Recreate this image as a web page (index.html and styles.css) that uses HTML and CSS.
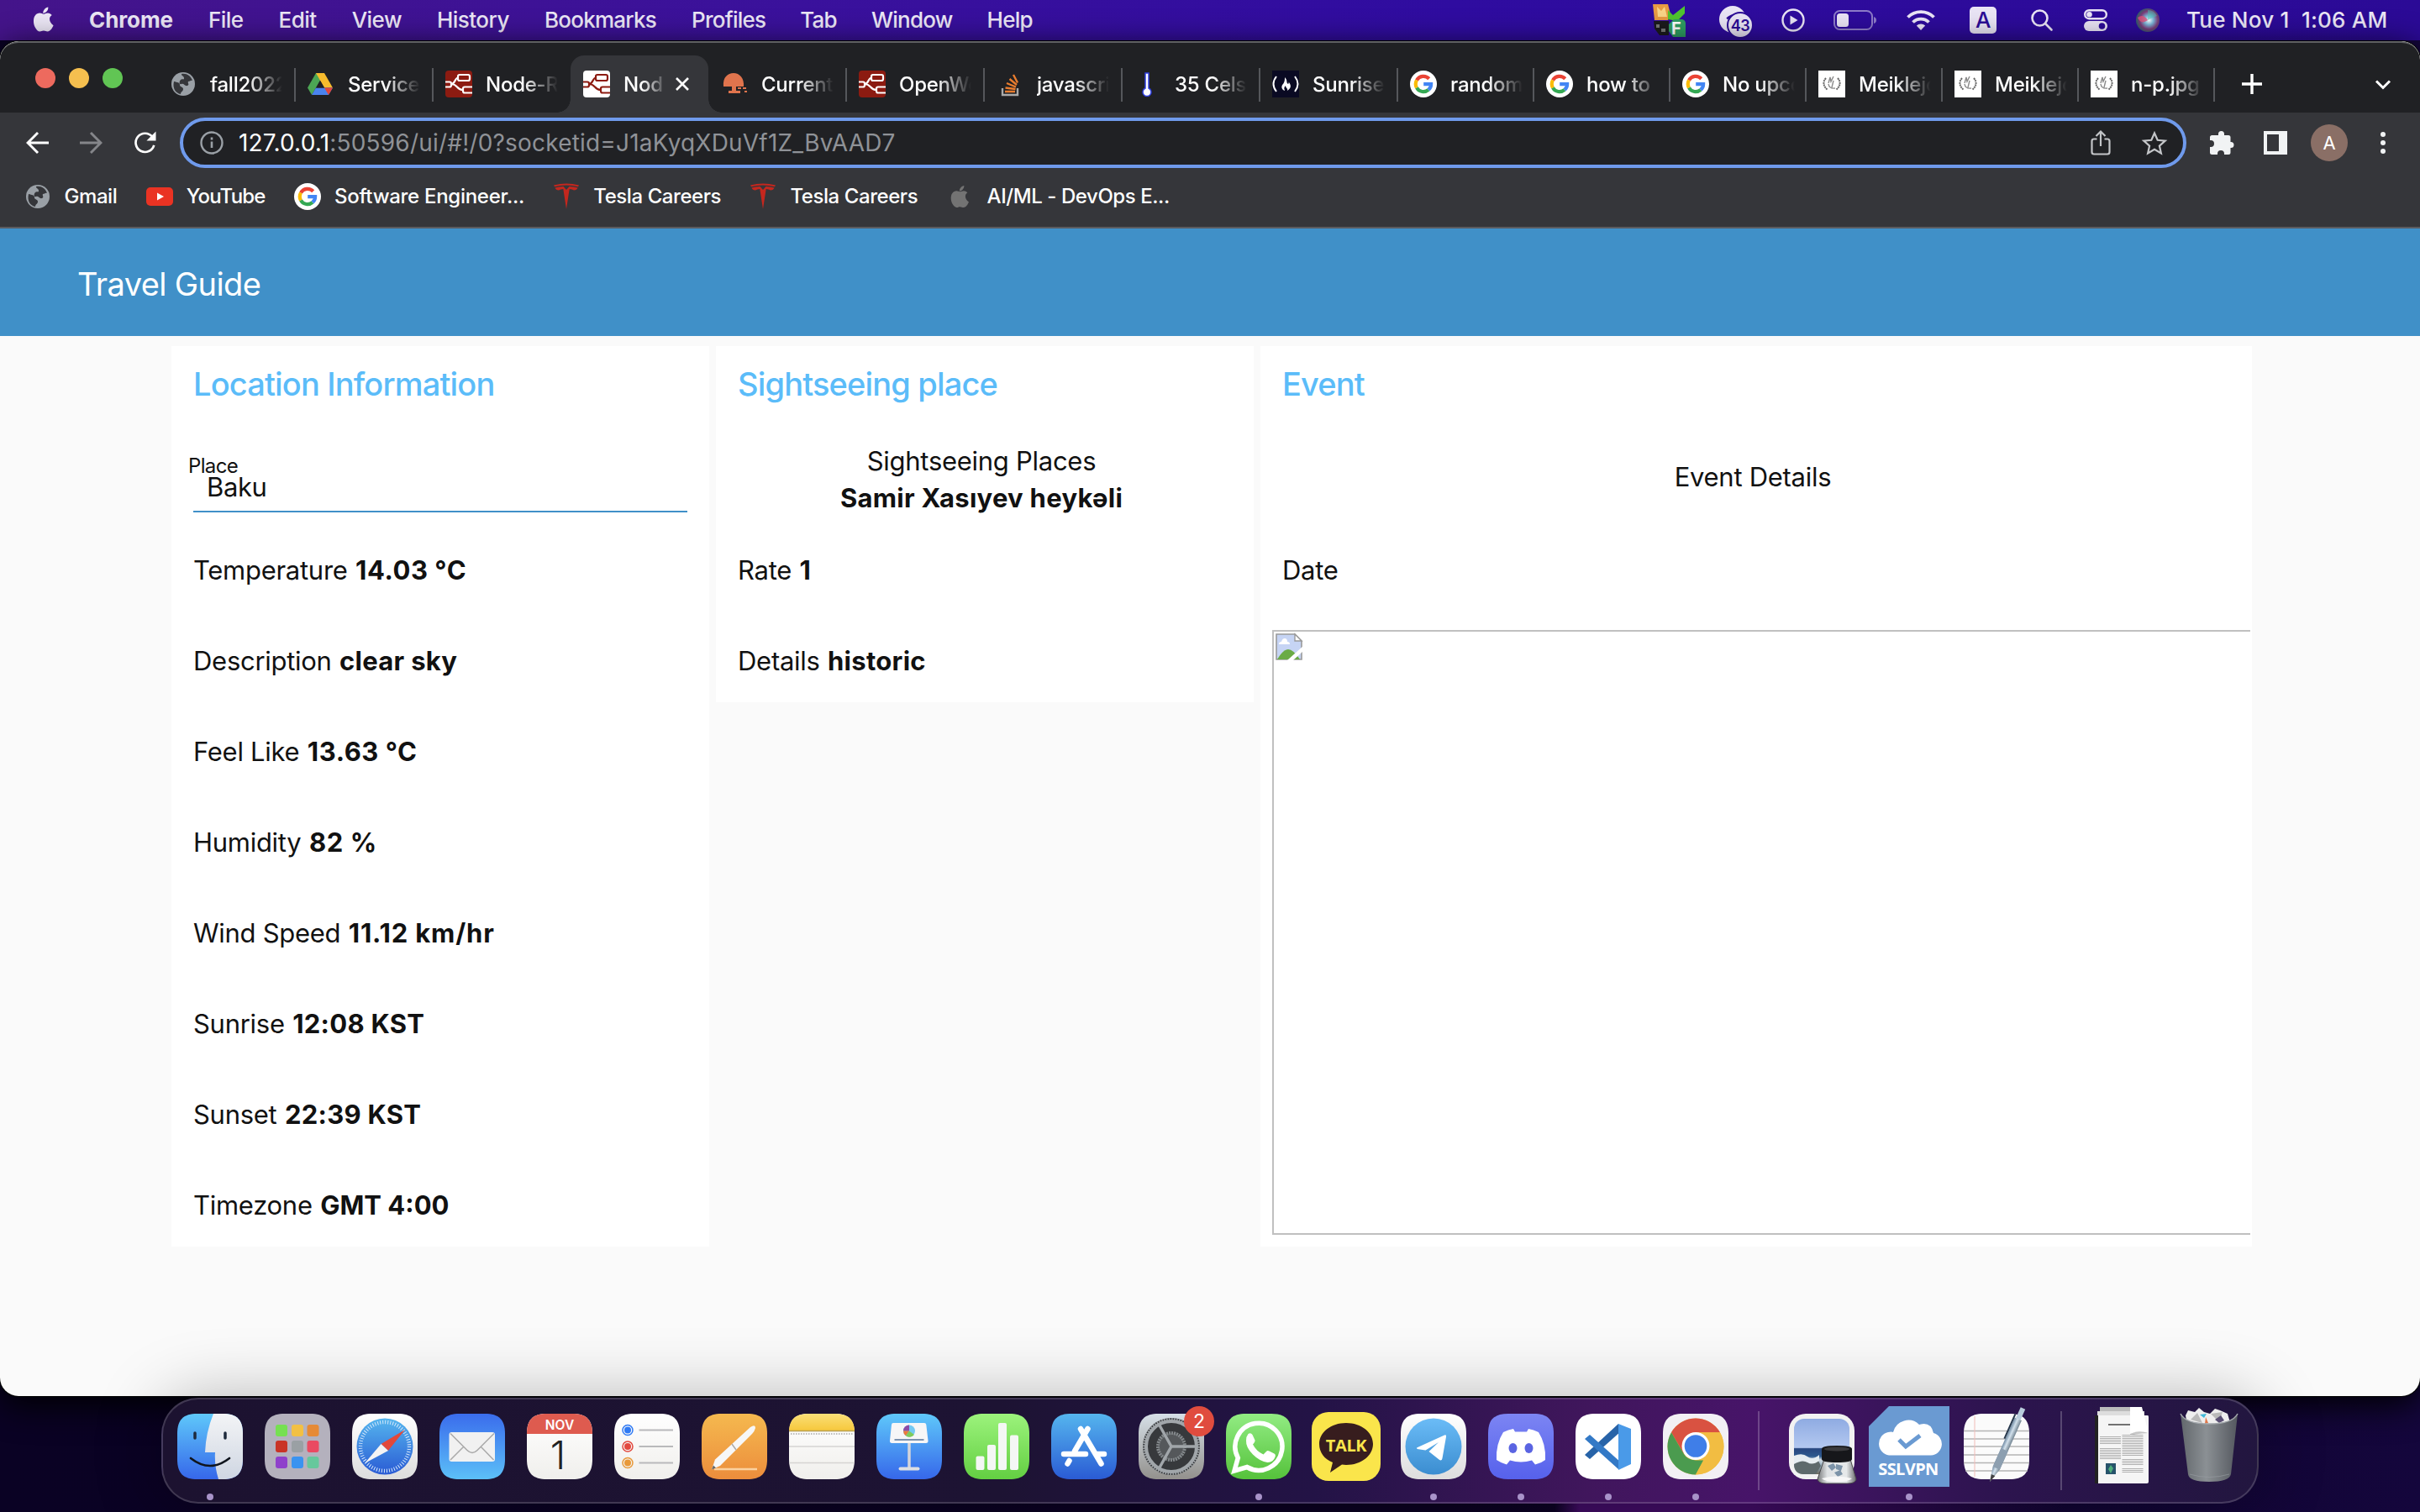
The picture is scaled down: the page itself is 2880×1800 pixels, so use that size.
FILE: index.html
```html
<!DOCTYPE html>
<html lang="en">
<head>
<meta charset="utf-8">
<title>Travel Guide</title>
<link rel="stylesheet" href="styles.css">
</head>
<body>
<svg class="defs" aria-hidden="true">
  <defs>
    <linearGradient id="gBlue" x1="0" y1="0" x2="0" y2="1"><stop offset="0" stop-color="#5fc8fa"/><stop offset="1" stop-color="#3667ea"/></linearGradient>
    <linearGradient id="gBlueUp" x1="0" y1="0" x2="0" y2="1"><stop offset="0" stop-color="#3a6cec"/><stop offset="1" stop-color="#5cc0f8"/></linearGradient>
    <linearGradient id="gStore" x1="0" y1="0" x2="0" y2="1"><stop offset="0" stop-color="#55b5ee"/><stop offset="1" stop-color="#2a5bd4"/></linearGradient>
    <linearGradient id="gSky" x1="0" y1="0" x2="0" y2="1"><stop offset="0" stop-color="#6bbcf7"/><stop offset="1" stop-color="#3b8dd0"/></linearGradient>
    <linearGradient id="gGreen" x1="0" y1="0" x2="0" y2="1"><stop offset="0" stop-color="#9cf37c"/><stop offset="1" stop-color="#63cf42"/></linearGradient>
    <linearGradient id="gWhats" x1="0" y1="0" x2="0" y2="1"><stop offset="0" stop-color="#92ec83"/><stop offset="1" stop-color="#55c23b"/></linearGradient>
    <linearGradient id="gOrange" x1="0" y1="0" x2="0" y2="1"><stop offset="0" stop-color="#f5b94f"/><stop offset="1" stop-color="#ec8d3c"/></linearGradient>
    <linearGradient id="gYellow" x1="0" y1="0" x2="0" y2="1"><stop offset="0" stop-color="#fadf78"/><stop offset="1" stop-color="#f6c83c"/></linearGradient>
    <linearGradient id="gWhite" x1="0" y1="0" x2="0" y2="1"><stop offset="0" stop-color="#ffffff"/><stop offset="1" stop-color="#dddddd"/></linearGradient>
    <linearGradient id="gPaper" x1="0" y1="0" x2="0" y2="1"><stop offset="0" stop-color="#ffffff"/><stop offset="1" stop-color="#f0efec"/></linearGradient>
    <linearGradient id="gFace" x1="0" y1="0" x2="0" y2="1"><stop offset="0" stop-color="#f3f4f6"/><stop offset="1" stop-color="#cfd6e2"/></linearGradient>
    <linearGradient id="gDisc" x1="0" y1="0" x2="0" y2="1"><stop offset="0" stop-color="#7c85f3"/><stop offset="1" stop-color="#5661ec"/></linearGradient>
    <linearGradient id="gGrey" x1="0" y1="0" x2="0" y2="1"><stop offset="0" stop-color="#d6dfe7"/><stop offset="1" stop-color="#93918d"/></linearGradient>
    <linearGradient id="gCan" x1="0" y1="0" x2="1" y2="0"><stop offset="0" stop-color="#62676c"/><stop offset=".45" stop-color="#8b9094"/><stop offset="1" stop-color="#54585f"/></linearGradient>
    <linearGradient id="gOcean" x1="0" y1="0" x2="0" y2="1"><stop offset="0" stop-color="#8fabe2"/><stop offset=".52" stop-color="#b3c8f0"/><stop offset=".54" stop-color="#27467f"/><stop offset=".68" stop-color="#2f5b8f"/><stop offset=".74" stop-color="#d3dde6"/><stop offset=".86" stop-color="#8ba4b4"/><stop offset="1" stop-color="#6d6a5e"/></linearGradient>
    <linearGradient id="gPen" x1="0" y1="0" x2="1" y2="0"><stop offset="0" stop-color="#6f8aa3"/><stop offset=".45" stop-color="#d3e1ec"/><stop offset="1" stop-color="#70828f"/></linearGradient>
    <linearGradient id="gJar" x1="0" y1="0" x2="1" y2="0"><stop offset="0" stop-color="#77797b"/><stop offset=".25" stop-color="#dfe2e4"/><stop offset=".75" stop-color="#e6e9ea"/><stop offset="1" stop-color="#6a6c6e"/></linearGradient>
    <radialGradient id="gSiri" cx=".55" cy=".5" r=".55"><stop offset="0" stop-color="#ffffff"/><stop offset=".35" stop-color="#7bb7d8"/><stop offset=".7" stop-color="#7b3b78"/><stop offset="1" stop-color="#2b5f6a"/></radialGradient>
  </defs>
  <symbol id="apple" viewBox="0 0 26 30"><path d="M18 0c.2 2-.6 3.800-1.800 5.200S13.200 7.600 11.700 7.500C11.500 5.700 12.400 3.800 13.500 2.600 14.700 1.100 16.600.1 18 0zM24.500 22.500c-.8 1.800-1.200 2.600-2.200 4.100-1.400 2-3.200 3.400-5.200 3.400-1.800 0-2.300-1-4.700-1s-3 1.100-4.800 1c-2 0-3.600-1.800-5-3.900C-.9 21-.7 13.400 1.900 10.300c1.500-2 3.600-3 5.700-3 2 0 3.300 1.100 5 1.100 1.600 0 2.600-1.100 5-1.100 1.800 0 3.700.9 5 2.600-4.300 2.500-3.700 8.800 1.900 12.600z"/></symbol>
  <symbol id="globe" viewBox="0 0 28 28"><circle cx="14" cy="14" r="14" fill="#9aa0a6"/><path d="M3 11c4 1 7 1 7 4s4 2 4 5-3 3-3 6C5 25 1 19 3 11zM12 2c6-1 11 2 13 8-2-1-3 1-5 1-1 2 2 4-1 5s-4-3-7-2-3-3-1-5 4 1 4-2-3-2-3-5z" fill="#35363a"/></symbol>
  <symbol id="google" viewBox="0 0 32 32"><circle cx="16" cy="16" r="16" fill="#fff"/><g fill="none" stroke-width="4.200"><path d="M22.700 9.700A9.200 9.200 0 0 0 8 11.500" stroke="#ea4335"/><path d="M8 11.500a9.200 9.200 0 0 0 0 9" stroke="#fbbc05"/><path d="M8 20.500a9.200 9.200 0 0 0 14 2.400" stroke="#34a853"/><path d="M22 22.900c2-1.800 3.100-4 3.100-6.700H16.200" stroke="#4285f4"/></g></symbol>
  <symbol id="nodered" viewBox="0 0 32 32"><g fill="none" stroke="currentColor" stroke-width="2.200"><rect x="15" y="5" width="14" height="7" rx="2"/><rect x="21" y="19.500" width="13" height="7" rx="2"/><path d="M0 13.500h5q2 0 2 2v2q0 2-2 2H0M7 16c5 0 4-7 8-7.500M7 16c8 0 6 7 14 7"/></g></symbol>
  <symbol id="tesla" viewBox="0 0 32 32"><path d="M1 2.500Q16-1.500 31 2.500l-1 1.700Q16 .8 2 4.200zM2.500 5.500Q8 4 12.500 4L16 8l3.500-4q4.500 0 10 1.500-1 3-4.500 3-2-1.500-5.300-1.500L16 31 12.300 7Q9 7 7 8.500q-3.500 0-4.500-3z" fill="#c4271e"/></symbol>
  <symbol id="meikle" viewBox="0 0 32 32"><path d="M0 0h32v32H0z" fill="#fff"/><g fill="none" stroke="#666" stroke-width="1.400"><path d="M9 9Q3 16 11 23M23 9q6 7-2 14" stroke-dasharray="2 .7" stroke-width="2"/><path d="M12 15l2-7 1 5 3-6M16 20l2-8M12 16q1 6 8 5" stroke="#8a8a8a"/></g></symbol>
  <symbol id="squircle" viewBox="0 0 78 78"><path d="M24 0h30c17 0 24 7 24 24v30c0 17-7 24-24 24H24C7 78 0 71 0 54V24C0 7 7 0 24 0z"/></symbol>
</svg>

<header class="menubar">
  <svg class="menubar-apple"><use href="#apple"/></svg>
  <nav class="menus"><b>Chrome</b><span>File</span><span>Edit</span><span>View</span><span>History</span><span>Bookmarks</span><span>Profiles</span><span>Tab</span><span>Window</span><span>Help</span></nav>
  <div class="status">
    <svg class="s-app" viewBox="0 0 40 40"><path d="M1 1h18l3 12-3 7H3z" fill="#e79a43"/><path d="M6 4l5 5 4-5 3 12H7z" fill="#f8d487"/><path d="M19 8l6 6L39 3v9l-9 9-11-2z" fill="#4fc42f"/><path d="M2 21h18v17H9l-6-8z" fill="#1b1b1d"/><path d="M5 25h4v4H5zM11 30h5v4h-5z" fill="#777"/><path d="M26 19h10q4 1 4 5v16H25l-5-7v-8z" fill="#2e9e63"/><text x="23" y="37" class="f-letter">F</text></svg>
    <svg class="s-chat" viewBox="0 0 40 38"><circle cx="16" cy="16" r="16" fill="#e9e4f5"/><path d="M9 15q8-7 17-3M9 15q7-2 14-1" fill="none" stroke="#2c0c96" stroke-width="2"/><circle cx="25" cy="23" r="15" fill="#e9e4f5" stroke="#2c0c96" stroke-width="2"/><text x="25" y="30" class="badge-num">43</text></svg>
    <svg class="s-play" viewBox="0 0 28 28"><circle cx="14" cy="14" r="12.500" fill="none" stroke="#e9e4f5" stroke-width="2.400"/><path d="M10.500 8.500v11l9-5.500z" fill="#e9e4f5"/></svg>
    <svg class="s-batt" viewBox="0 0 51 24"><rect x="1" y="1" width="45" height="22" rx="6.500" fill="none" stroke="#8d7bc8" stroke-width="2"/><rect x="4" y="4" width="14" height="16" rx="3.500" fill="#e9e4f5"/><path d="M48 8q3 1 3 4t-3 4z" fill="#8d7bc8"/></svg>
    <svg class="s-wifi" viewBox="0 0 34 24"><g fill="none" stroke="#e9e4f5" stroke-width="3.800"><path d="M1.500 8.500a22 22 0 0 1 31 0M7.500 14.500a13.500 13.500 0 0 1 19 0"/></g><path d="M17 24l-5.200-5.500a7.500 7.500 0 0 1 10.400 0z" fill="#e9e4f5"/></svg>
    <span class="s-input">A</span>
    <svg class="s-find" viewBox="0 0 26 26"><g fill="none" stroke="#e9e4f5" stroke-width="2.600" stroke-linecap="round"><circle cx="10.500" cy="10.500" r="9"/><path d="M17.500 17.500l7 7"/></g></svg>
    <svg class="s-ctrl" viewBox="0 0 28 26"><rect x="1.200" y="1.200" width="25.600" height="10" rx="5" fill="none" stroke="#e9e4f5" stroke-width="2.400"/><circle cx="6.500" cy="6.200" r="3.300" fill="#e9e4f5"/><rect y="14" width="28" height="12" rx="6" fill="#e9e4f5"/><circle cx="21.500" cy="20" r="3.800" fill="#2c0c96"/></svg>
    <svg class="s-siri" viewBox="0 0 28 28"><circle cx="14" cy="14" r="14" fill="url(#gSiri)"/><path d="M2 11q7-5 12 3-8 6-12-3z" fill="#e0527b" opacity=".8"/><path d="M14 2q8 0 11 7-7 2-11 5z" fill="#49c6b4" opacity=".5"/></svg>
    <time class="clock">Tue Nov 1&nbsp; 1:06 AM</time>
  </div>
</header>

<main class="window">
  <div class="tabstrip">
    <div class="lights"><i class="close"></i><i class="min"></i><i class="max"></i></div>
    <div class="tabs">
      <div class="tab"><svg class="fav small"><use href="#globe"/></svg><span>fall2022</span></div>
      <div class="tab"><svg class="fav drive" viewBox="0 0 30 26"><path d="M10 0h10l-10 17.500L5 26 0 17.500z" fill="#4ca654"/><path d="M10 0h10l10 17.500H20z" fill="#f6bb2d"/><path d="M5 26l5-8.500h20L25 26z" fill="#4a83ee"/><path d="M30 17.500L25 26l-5-8.500z" fill="#e2463a"/><path d="M15 9l5 8.500H10z" fill="#202124"/></svg><span>Service</span></div>
      <div class="tab"><svg class="fav nr-dark"><use href="#nodered"/></svg><span>Node-RED</span></div>
      <div class="tab active"><svg class="fav nr-light"><use href="#nodered"/></svg><span>Node</span><svg class="x" viewBox="0 0 16 16"><path d="M1 1l14 14M15 1L1 15" stroke="#fff" stroke-width="2.600"/></svg></div>
      <div class="tab"><svg class="fav" viewBox="0 0 32 32"><path d="M3 19C2 8 8 3 15 3s13 6 12 16H18v5h5v3H9v-3h4v-5z" fill="#e0744d"/><path d="M20 21h4M26 21h4M28 25h3" stroke="#e0744d" stroke-width="2"/></svg><span>Current w</span></div>
      <div class="tab"><svg class="fav nr-dark"><use href="#nodered"/></svg><span>OpenWe</span></div>
      <div class="tab"><svg class="fav" viewBox="0 0 32 32"><path d="M7 21v8h18v-8" fill="none" stroke="#aaa" stroke-width="2.400"/><path d="M10 25h12M10.500 20.500l12 1.500M12 15l11 4.500M15.500 10l8.500 7M20 5l5 9.500" stroke="#e87c2e" stroke-width="2.400"/></svg><span>javascript</span></div>
      <div class="tab"><svg class="fav" viewBox="0 0 32 32"><path d="M13 3h4v18a5 5 0 1 1-4 0z" fill="#fff" stroke="#3040e0" stroke-width="1.500"/></svg><span>35 Celsius</span></div>
      <div class="tab"><svg class="fav fcc" viewBox="0 0 32 32"><path d="M5 7q-7 9 0 18M27 7q7 9 0 18" fill="none" stroke="#fff" stroke-width="2"/><path d="M15 8c4 4 1 6 4 8 1-1 1-2 0-3 4 4 4 8-1 11 1-3-2-3-2-6-3 3-1 4-1 6-5-2-4-6-2-8 2-3 2-5 2-8z" fill="#fff"/></svg><span>Sunrise s</span></div>
      <div class="tab narrow"><svg class="fav"><use href="#google"/></svg><span>random j</span></div>
      <div class="tab narrow"><svg class="fav"><use href="#google"/></svg><span>how to</span></div>
      <div class="tab narrow"><svg class="fav"><use href="#google"/></svg><span>No upcoming</span></div>
      <div class="tab narrow"><svg class="fav"><use href="#meikle"/></svg><span>Meiklejohn</span></div>
      <div class="tab narrow"><svg class="fav"><use href="#meikle"/></svg><span>Meiklejohn</span></div>
      <div class="tab narrow"><svg class="fav"><use href="#meikle"/></svg><span>n-p.jpg (</span></div>
    </div>
    <svg class="newtab" viewBox="0 0 24 24"><path d="M12 0v24M0 12h24" stroke="#fff" stroke-width="3.400"/></svg>
    <svg class="tabsearch" viewBox="0 0 18 11"><path d="M1 1.500l8 8 8-8" fill="none" stroke="#fff" stroke-width="3"/></svg>
  </div>

  <div class="toolbar">
    <svg class="nav" viewBox="0 0 26 26"><path d="M26 13H2M13.500 1.500L2 13l11.500 11.500" fill="none" stroke="#fff" stroke-width="2.800"/></svg>
    <svg class="nav" viewBox="0 0 26 26"><path d="M0 13h24M12.500 1.500L24 13 12.500 24.500" fill="none" stroke="#85868a" stroke-width="2.800"/></svg>
    <svg class="nav" viewBox="0 0 28 28"><path d="M23 6.500A11.500 11.500 0 1 0 25.200 17" fill="none" stroke="#fff" stroke-width="2.800"/><path d="M27.500 0v11.500H16z" fill="#fff"/></svg>
    <div class="omnibox">
      <svg class="info" viewBox="0 0 28 28"><circle cx="14" cy="14" r="12.500" fill="none" stroke="#9aa0a6" stroke-width="2.400"/><path d="M14 12.500V20M14 7.500v3" stroke="#9aa0a6" stroke-width="2.600"/></svg>
      <div class="url"><em>127.0.0.1</em>:50596/ui/#!/0?socketid=J1aKyqXDuVf1Z_BvAAD7</div>
      <svg class="share" viewBox="0 0 24 30"><path d="M7.500 10.500H4q-2.500 0-2.500 2.500v13q0 2.500 2.500 2.500h16q2.500 0 2.500-2.500V13q0-2.500-2.500-2.500h-3.500M12 19V2M6.500 7L12 1.500 17.500 7" fill="none" stroke="#c3c5c8" stroke-width="2.200"/></svg>
      <svg class="star" viewBox="0 0 30 28"><path d="M15 2.500l3.700 8.300 9 .8-6.800 6 2 8.900L15 21.800l-7.900 4.700 2-8.900-6.800-6 9-.8z" fill="none" stroke="#c3c5c8" stroke-width="2.200"/></svg>
    </div>
    <svg class="ext" viewBox="0 0 28 28"><path d="M10 3.500a3.500 3.500 0 0 1 7 0V5h5q2.500 0 2.500 2.500V13h.5a3.500 3.500 0 0 1 0 7h-.5v5.500Q24.500 28 22 28h-5v-1a4 4 0 0 0-8 0v1H2.500Q0 28 0 25.500V19h1a4 4 0 0 0 0-8H0V7.500Q0 5 2.500 5H10z" fill="#f1f3f4"/></svg>
    <svg class="panel" viewBox="0 0 28 28"><path d="M0 0h28v28H0zM4 4v20h14V4z" fill="#f1f3f4" fill-rule="evenodd"/></svg>
    <div class="avatar">A</div>
    <div class="dots"><i></i><i></i><i></i></div>
  </div>

  <div class="bookmarks">
    <a><svg class="fav small"><use href="#globe"/></svg>Gmail</a>
    <a><svg class="fav" viewBox="0 0 32 32"><rect y="5" width="32" height="22" rx="5" fill="#ea3323"/><path d="M13 11.500v9l8-4.500z" fill="#fff"/></svg>YouTube</a>
    <a class="wide"><svg class="fav"><use href="#google"/></svg>Software Engineer...</a>
    <a><svg class="fav"><use href="#tesla"/></svg>Tesla Careers</a>
    <a><svg class="fav"><use href="#tesla"/></svg>Tesla Careers</a>
    <a><svg class="fav mini-apple"><use href="#apple"/></svg>AI/ML - DevOps E...</a>
  </div>

  <div class="app-header">Travel Guide</div>

  <div class="page">
    <section class="card">
      <h2>Location Information</h2>
      <label class="field"><span>Place</span><span class="value">Baku</span></label>
      <p>Temperature <b class="wide">14.03 °C</b></p>
      <p>Description <b>clear sky</b></p>
      <p>Feel Like <b class="wide">13.63 °C</b></p>
      <p>Humidity <b class="wide">82 %</b></p>
      <p>Wind Speed <b class="loose">11.12 km/hr</b></p>
      <p>Sunrise <b>12:08 KST</b></p>
      <p>Sunset <b>22:39 KST</b></p>
      <p>Timezone <b class="snug">GMT 4:00</b></p>
    </section>
    <section class="card">
      <h2>Sightseeing place</h2>
      <div class="centered"><span>Sightseeing Places</span><b>Samir Xasıyev heykəli</b></div>
      <p>Rate <b>1</b></p>
      <p>Details <b>historic</b></p>
    </section>
    <section class="card event">
      <h2>Event</h2>
      <div class="centered lifted"><span>Event Details</span></div>
      <p>Date</p>
      <div class="missing-image">
        <svg viewBox="0 0 32 32"><path d="M1 1h22l8 8v22H1z" fill="#c6d4f4" stroke="#9a9a9a" stroke-width="1.600"/><path d="M23 1v8h8z" fill="#fff" stroke="#9a9a9a" stroke-width="1.400"/><path d="M4 13q0-3 3-3 1-4 4-4t3 4q3 0 3 3z" fill="#fff"/><path d="M2 31q7-12 13-12t14 12z" fill="#6aab45"/><path d="M33 15L14 32h7l12-11z" fill="#fff"/></svg>
      </div>
    </section>
  </div>
</main>

<footer class="dock">
  <div class="icon running"><svg viewBox="0 0 78 78"><clipPath id="sq"><path d="M24 0h30c17 0 24 7 24 24v30c0 17-7 24-24 24H24C7 78 0 71 0 54V24C0 7 7 0 24 0z"/></clipPath><g clip-path="url(#sq)"><path d="M0 0h78v78H0z" fill="url(#gBlue)"/><path d="M43 0Q34 22 33 46h12q-1 16 4 32h29V0z" fill="url(#gFace)"/></g><path d="M21 23v6M57 23v6" stroke="#1e2a3c" stroke-width="3.500" stroke-linecap="round"/><path d="M16 53q23 18 46 0" fill="none" stroke="#10151d" stroke-width="2.600" stroke-linecap="round"/></svg></div>
  <div class="icon"><svg viewBox="0 0 78 78"><use href="#squircle" fill="#b4b1bd"/><g><rect x="13" y="13" width="14" height="14" rx="3" fill="#76e052"/><rect x="32" y="13" width="14" height="14" rx="3" fill="#f2c044"/><rect x="50.500" y="13" width="14" height="14" rx="3" fill="#e68a36"/><rect x="13" y="32" width="14" height="14" rx="3" fill="#c93426"/><rect x="32" y="32" width="14" height="14" rx="3" fill="#9aa0a4"/><rect x="50.500" y="32" width="14" height="14" rx="3" fill="#ea4a62"/><rect x="13" y="51" width="14" height="14" rx="3" fill="#8f41cb"/><rect x="32" y="51" width="14" height="14" rx="3" fill="#3a93f0"/><rect x="50.500" y="51" width="14" height="14" rx="3" fill="#66c89c"/></g></svg></div>
  <div class="icon"><svg viewBox="0 0 78 78"><use href="#squircle" fill="url(#gWhite)"/><circle cx="39" cy="39" r="33.500" fill="url(#gStore)"/><circle cx="39" cy="39" r="29" fill="none" stroke="#d5e8fb" stroke-width="4.500" stroke-dasharray="1 2.037"/><path d="M63 19L43 44l-8.500-8z" fill="#e2483a"/><path d="M15 59l19.500-23 8.500 8z" fill="#f4f4f4"/></svg></div>
  <div class="icon"><svg viewBox="0 0 78 78"><use href="#squircle" fill="url(#gBlueUp)"/><rect x="11.500" y="22" width="54.500" height="35" rx="3" fill="#f1f1f1"/><path d="M13 55l16-16M64.500 55L49 39M13 23.500l20 20q6 6 12 0l20-20" fill="none" stroke="#a9a9a9" stroke-width="1.500"/></svg></div>
  <div class="icon"><svg viewBox="0 0 78 78"><use href="#squircle" fill="url(#gPaper)"/><path d="M0 24C0 7 7 0 24 0h30c17 0 24 7 24 24z" fill="#de5b4f"/><text x="39" y="18.500" class="cal-month">NOV</text><text x="37" y="66" class="cal-day">1</text></svg></div>
  <div class="icon"><svg viewBox="0 0 78 78"><use href="#squircle" fill="url(#gPaper)"/><path d="M29.500 19.500H70M29.500 39H70M29.500 58.500H70" stroke="#b9b9bb" stroke-width="1.800"/><g fill="none" stroke-width="1.500"><circle cx="16" cy="19.500" r="6" stroke="#2f7af4"/><circle cx="16" cy="39" r="6" stroke="#e2493f"/><circle cx="16" cy="58.500" r="6" stroke="#e8993a"/></g><circle cx="16" cy="19.500" r="4" fill="#2f7af4"/><circle cx="16" cy="39" r="4" fill="#e2493f"/><circle cx="16" cy="58.500" r="4" fill="#e8993a"/></svg></div>
  <div class="icon"><svg viewBox="0 0 78 78"><use href="#squircle" fill="url(#gOrange)"/><path d="M15 66h51" stroke="#fbd1a0" stroke-width="2.500"/><path d="M12 66.500l4-12L58 16q6-4 6 1-1 4-4 7L22 62z" fill="#f7f7f7"/><path d="M12 66.500l2-5 3 3z" fill="#666"/><path d="M36 36l5 7" stroke="#aaa" stroke-width="1.500"/></svg></div>
  <div class="icon"><svg viewBox="0 0 78 78"><use href="#squircle" fill="url(#gPaper)"/><path d="M0 20C1 6 8 0 24 0h30c16 0 23 6 24 20z" fill="url(#gYellow)"/><path d="M0 20.500h78" stroke="#b9a050" stroke-width="1.500"/><path d="M2 24h74" stroke="#bbb" stroke-width="2" stroke-dasharray="1.500 1.500"/><path d="M0 39h78M0 58.500h78" stroke="#d5d4d2" stroke-width="1.600"/></svg></div>
  <div class="icon"><svg viewBox="0 0 78 78"><use href="#squircle" fill="url(#gBlue)"/><path d="M20 11h37q2 0 2.300 2L61.500 32q.3 3-2.500 3H18.500q-2.800 0-2.500-3L18 13q.2-2 2-2z" fill="#f6f6f7"/><path d="M21.500 31h35" stroke="#7c93b0" stroke-width="2"/><circle cx="39" cy="20.500" r="7" fill="#74c9f3"/><path d="M39 20.500v-7a7 7 0 0 0-7 7z" fill="#8d4aa6"/><path d="M39 20.500h-7a7 7 0 0 0 3 5.700z" fill="#ec7a3b"/><path d="M39 20.500l-4 5.700a7 7 0 0 0 10-1.200z" fill="#7fcb5b"/><path d="M39 35v30" stroke="#d5d5da" stroke-width="3.500"/><rect x="26.500" y="63.500" width="25" height="4" rx="2" fill="#dedfe3"/></svg></div>
  <div class="icon"><svg viewBox="0 0 78 78"><use href="#squircle" fill="url(#gGreen)"/><g fill="#f4f7f4"><rect x="14.500" y="50.500" width="10" height="16.500" rx="2"/><rect x="28" y="37" width="10" height="30" rx="2"/><rect x="41" y="11" width="10" height="56" rx="2"/><rect x="55" y="25.500" width="10" height="41.500" rx="2"/></g></svg></div>
  <div class="icon"><svg viewBox="0 0 78 78"><use href="#squircle" fill="url(#gStore)"/><g stroke="#fff" stroke-width="6.500" stroke-linecap="round"><path d="M15 48h26M54 48h9M43.500 18L28 44.500M21.500 56l-2 3.500M35 18l24.500 41.500"/></g></svg></div>
  <div class="icon"><svg viewBox="0 0 78 78"><use href="#squircle" fill="url(#gGrey)"/><circle cx="39" cy="39" r="34" fill="#37393c"/><circle cx="39" cy="39" r="30" fill="none" stroke="#a1a6aa" stroke-width="4"/><circle cx="39" cy="39" r="32.500" fill="none" stroke="#a1a6aa" stroke-width="3" stroke-dasharray="1.500 1.500"/><circle cx="39" cy="39" r="16" fill="#55585b" stroke="#83888b" stroke-width="4" stroke-dasharray="2 1"/><path d="M39 39h28M39 39L25 14M39 39L25 64" stroke="#a1a6aa" stroke-width="3.500"/></svg><span class="badge">2</span></div>
  <div class="icon running"><svg viewBox="0 0 78 78"><use href="#squircle" fill="url(#gWhats)"/><path d="M10 68l4.300-15.500A28 28 0 1 1 25 63.500z" fill="none" stroke="#fff" stroke-width="5.500"/><path d="M26.500 24q3-2 5 1l3 6.500q.5 1.500-2.500 5 4 8 12.500 12l4-4q1-1 3 0l6 3q2 1 1 4-2 6-9 6.500-9-1-17.500-9.500T24 32q0-5 2.500-8z" fill="#fff"/></svg></div>
  <div class="icon big"><svg viewBox="0 0 82 82"><rect width="82" height="82" rx="20" fill="#fae54b"/><path d="M41 13c18 0 32 11 32 25S59 63 41 63l-5-.4L22 72l3-12C15 56 9 48 9 38c0-14 14-25 32-25z" fill="#371d1e"/><text x="41" y="46.500" class="talk">TALK</text></svg></div>
  <div class="icon running"><svg viewBox="0 0 78 78"><use href="#squircle" fill="url(#gWhite)"/><circle cx="39" cy="39" r="33.500" fill="url(#gSky)"/><path d="M19 40.500L52 25.500q2.500-1 2 2L49.500 53q-.5 4-4 1.500L33.500 45 45 34 29.500 43.500l-10-1.500z" fill="#fff"/></svg></div>
  <div class="icon running"><svg viewBox="0 0 78 78"><use href="#squircle" fill="url(#gDisc)"/><path d="M30 18q-6 1-12 4-9 14-8 33 6 4 12 5.500l4-5q13 4 26 0l4 5q7-1.500 12-5.500 1-19-8-33-6-3-12-4l-2 3.500H32z" fill="#fff"/><ellipse cx="29.500" cy="41" rx="5" ry="6" fill="#5a64e2"/><ellipse cx="48.500" cy="41" rx="5" ry="6" fill="#5a64e2"/></svg></div>
  <div class="icon running"><svg viewBox="0 0 78 78"><use href="#squircle" fill="#fff"/><path d="M11 49l6 5 37-33-3-9z" fill="#2763a8"/><path d="M11 30l6-5 37 33-3 8z" fill="#3379c6"/><path d="M51 12l15 6v42l-15 7z" fill="#4a9ae8"/></svg></div>
  <div class="icon running"><svg viewBox="0 0 78 78"><use href="#squircle" fill="#f2f0f4"/><circle cx="39" cy="39" r="33.500" fill="#f2bd42"/><path d="M39 5.500A33.500 33.500 0 0 1 68 22.300H39L24.500 47 10 22.200A33.500 33.500 0 0 1 39 5.500z" fill="#d95241"/><path d="M10 22.200L24.700 47.500Q29 55 39 55.500h9.500L39 72.500A33.500 33.500 0 0 1 10 22.200z" fill="#4b9b4f"/><path d="M68 22.300H39a16 16 0 0 1 14 24L39 72.500A33.500 33.500 0 0 0 68 22.300z" fill="#f2bd42"/><circle cx="39" cy="38.500" r="16.500" fill="#fff"/><circle cx="39" cy="38.500" r="13.300" fill="#3f7ee8"/></svg></div>
  <i class="sep first"></i>
  <div class="icon preview"><svg viewBox="0 0 82 84"><rect width="78" height="78" rx="20" fill="#f2f2f2"/><rect x="6" y="6" width="66" height="66" rx="12" fill="url(#gOcean)"/><path d="M6 56q8-4 14 0t14-2l4 8-6 10H18Q6 72 6 60z" fill="#5e6a6c"/><path d="M6 50q10-4 16 1t14-2v7q-8 6-14 2t-16 2z" fill="#e6edf1"/><path d="M42 54h31l7 24q-1 5-10 5H44q-9 0-10-5z" fill="url(#gJar)" stroke="#4a4a4c"/><path d="M46 62l7-3 3 5-5 4zM56 60l8 2-2 6-6-2zM54 70l7-3 3 5-6 3z" fill="#7c93a8"/><path d="M39 77q18-5 36 0-4 4-18 4t-18-4z" fill="#f7f7f7"/><path d="M39 42q0-4 18-4t18 4v12q0 4-18 4t-18-4z" fill="#16171a"/><ellipse cx="57" cy="42" rx="15" ry="2.500" fill="#3a3a3c"/></svg></div>
  <div class="icon vpn running"><svg viewBox="0 0 96 96"><path d="M24 0h72v96H0V24z" fill="#6a9ad2"/><path d="M24 58.500a14 14 0 0 1-1-27.500q4-1 6 0a18.500 18.500 0 0 1 31-9q14-4 17 10a13.500 13.500 0 0 1-3 26.500H24z" fill="#fff"/><path d="M36 40l8 8 17-13" fill="none" stroke="#6a9ad2" stroke-width="5"/><text x="47" y="82" class="vpn-text">SSLVPN</text></svg></div>
  <div class="icon edit"><svg viewBox="0 0 78 90"><g transform="translate(0 8)"><use href="#squircle" width="78" height="78" fill="#fbfbfb"/><path d="M0 20.500h78M0 30h78M0 39h78M0 49h78M0 58.500h78M2 68h74" stroke="#b5b5b5" stroke-width="1.500"/><path d="M13 3v72" stroke="#f2bcb8"/></g><g transform="translate(31 89) rotate(24)"><path d="M0 0L-4-18V-82h9v64z" fill="url(#gPen)"/><path d="M-4-18h9v-24h-9z" fill="#8d9fb0"/><path d="M-2.500-96h6v14h-6z" fill="#b9cddd"/><path d="M0 0l-2-9h5z" fill="#444"/><path d="M-5-86v32" stroke="#26374b" stroke-width="2"/></g></svg></div>
  <i class="sep second"></i>
  <div class="icon stack"><svg viewBox="0 0 64 92"><path d="M6 0h50v12H6z" fill="#bbb"/><path d="M3 5h56v12H3z" fill="#ddd"/><path d="M0 10h6v81H0z" fill="#222"/><path d="M4 10h59q1 0 1 2v77q0 2-2 2H4z" fill="#f5f5f5"/><path d="M16 21h33" stroke="#444" stroke-width="1.500"/><g stroke="#9a9a9a" stroke-width="25" stroke-dasharray="1 1" opacity=".75"><path d="M18.500 35v10M18.500 49v14M45 33v26M45 62v7M45 73v6"/></g><rect x="13" y="67" width="12" height="13" fill="#27536b"/><path d="M19 69l3 4-3 6-3-5z" fill="#4fae7b"/><path d="M42 0h14l8 31q-12-4-22 1z" fill="#fff"/><path d="M42 32q10-5 22-1-10 0-22 3z" fill="#c4c4c4"/></svg></div>
  <div class="icon trash"><svg viewBox="0 0 68 90"><path d="M6 10l3-6 8 2 5-5 6 5 7 2 6-6 6 2 9 4 4 14H8z" fill="#eee"/><path d="M12 15l8-8 6 12zM36 8l10 10 4-12z" fill="#b9b9b9"/><path d="M23 9l8-1-3 5z" fill="#41b8d8"/><path d="M30 12l3 7-4 1z" fill="#e0784a"/><path d="M41 15l7-5 4 6-6 3z" fill="#5a4f74"/><path d="M0 8q6 12 34 12T68 8l-8 72q-2 9-26 9T9 80z" fill="url(#gCan)"/><path d="M0 8q6 12 34 12T68 8" fill="none" stroke="#a3a8ac" stroke-width="1.500"/><path d="M11 80q23 7 47 0" fill="none" stroke="#9a9fa4" opacity=".6"/></svg></div>
</footer>
</body>
</html>
```
FILE: styles.css
```css
* { box-sizing: border-box; }
html, body { margin: 0; height: 1800px; width: 2880px; overflow: hidden; }
body {
  display: flex; flex-direction: column;
  font-family: Inter, "Noto Sans", sans-serif;
  background:
    linear-gradient(90deg, transparent 1850px, #3f0c62 1880px, #3f0c62 2080px, transparent 2460px) 0 1780px / 100% 20px no-repeat,
    linear-gradient(90deg, #0a0224, #0b0220 60%, #14063c);
}
.defs { position: absolute; width: 0; height: 0; }
svg { display: block; flex: none; overflow: visible; }
i, em { font-style: normal; }

/* Menu bar */
.menubar {
  flex: none; height: 48px; display: flex; align-items: center; padding: 0 38px 0 40px;
  background: linear-gradient(90deg, #44148a, #3a119c 33%, #2f0ca0 60%, #2b0a96);
  color: #ece7f6; font-size: 26px; font-weight: 500; letter-spacing: -.02em;
}
.menubar-apple { width: 25px; height: 30px; fill: #ece7f6; margin: -3px 41px 0 0; }
.menus { display: flex; gap: 42px; margin-top: -2px; }
.menus b { font-weight: 700; letter-spacing: -.004em; }
.menus span:nth-child(n+6) { letter-spacing: -.029em; }
.menus span:nth-child(n+8) { margin-left: -1px; }
.status { margin-left: auto; display: flex; align-items: center; }
.s-app { width: 40px; height: 40px; }
.f-letter { font: 700 20px Inter, sans-serif; fill: #fff; }
.s-chat { width: 40px; height: 38px; margin-left: 40px; margin-top: 4px; }
.badge-num { font: 600 18px Inter, sans-serif; fill: #2c0c96; text-anchor: middle; letter-spacing: -.02em; }
.s-play { width: 28px; height: 28px; margin-left: 34px; }
.s-batt { width: 51px; height: 24px; margin-left: 34px; }
.s-wifi { width: 34px; height: 24px; margin-left: 36px; margin-top: -1px; }
.s-input { width: 32px; height: 32px; margin-left: 41px; border-radius: 5px; background: #e9e4f5; color: #2c0c96; font-size: 26px; line-height: 32px; text-align: center; }
.s-find { width: 26px; height: 26px; margin-left: 41px; }
.s-ctrl { width: 28px; height: 26px; margin-left: 37px; }
.s-siri { width: 28px; height: 28px; margin-left: 34px; }
.clock { width: 240px; margin: -2px 0 0 32px; white-space: nowrap; letter-spacing: .009em; }

/* Browser window */
.window {
  flex: none; height: 1613px; margin-top: 1px; overflow: hidden; display: flex; flex-direction: column;
  background: #fafafa; border-radius: 22px; box-shadow: 0 0 0 1px #000, 0 10px 40px #000;
}
.tabstrip {
  flex: none; height: 85px; display: flex; background: #202124; border-top: 2px solid #5f6063;
  border-radius: 22px 22px 0 0; padding-top: 15px;
}
.lights { width: 187px; padding: 15px 0 0 42px; display: flex; gap: 16px; }
.lights i { width: 24px; height: 24px; border-radius: 50%; }
.close { background: #ed6a5e; }
.min { background: #f5bf4f; }
.max { background: #61c554; }
.tabs { display: flex; }
.tab {
  position: relative; width: 164px; height: 68px; display: flex; align-items: center; gap: 16px; padding-left: 15px;
  color: #fff; font-size: 24px; font-weight: 500; letter-spacing: -.01em;
}
.tab.narrow { width: 162px; }
.tab::after { content: ""; position: absolute; right: -1px; top: 15px; width: 2px; height: 40px; background: #55575b; }
.tab:nth-child(3)::after, .tab.active::after { display: none; }
.tab span {
  width: 86px; overflow: hidden; white-space: nowrap;
  -webkit-mask-image: linear-gradient(90deg, #000 45px, transparent 86px); mask-image: linear-gradient(90deg, #000 45px, transparent 86px);
}
.tab.active { background: #35363a; border-radius: 16px 16px 0 0; }
.tab.active::before {
  content: ""; position: absolute; left: -16px; right: -16px; bottom: 0; height: 16px;
  background:
    radial-gradient(circle at 0 0, transparent 15.500px, #35363a 16px) left / 16px 16px no-repeat,
    radial-gradient(circle at 100% 0, transparent 15.500px, #35363a 16px) right / 16px 16px no-repeat;
}
.tab.active span {
  width: 46px;
  -webkit-mask-image: linear-gradient(90deg, #000 22px, transparent 52px); mask-image: linear-gradient(90deg, #000 22px, transparent 52px);
}
.x { width: 16px; height: 16px; }
.fav { width: 32px; height: 32px; }
.fav.small { width: 28px; height: 28px; margin: 0 2px; }
.fav.drive { width: 30px; height: 26px; margin-right: 2px; }
.nr-dark { background: #8c1b11; color: #fff; border-radius: 4px; overflow: hidden; }
.nr-light { background: #fff; color: #8c1b11; border-radius: 4px; overflow: hidden; }
.fcc { background: #0a0a23; }
.newtab { width: 24px; height: 24px; margin: 22px 0 0 33px; }
.tabsearch { width: 18px; height: 11px; margin: 29px 35px 0 auto; }

.toolbar { flex: none; height: 72px; display: flex; align-items: center; background: #35363a; padding-left: 31px; }
.nav { width: 27px; height: 28px; margin-right: 37px; }
.nav:nth-child(3) { margin-right: 28px; }
.omnibox {
  width: 2388px; height: 60px; border: 4px solid #6f9aec; border-radius: 30px; background: #202124;
  display: flex; align-items: center; padding: 0 20px;
}
.info { width: 28px; height: 28px; margin-right: 18px; }
.url { flex: 1; color: #8f9297; font-size: 28px; letter-spacing: .007em; }
.url em { color: #fff; }
.share { width: 24px; height: 30px; margin: 0 37px 0 0; }
.star { width: 30px; height: 28px; margin-right: -1px; }
.ext { width: 28px; height: 28px; margin-left: 28px; }
.panel { width: 28px; height: 28px; margin-left: 36px; }
.avatar { width: 44px; height: 44px; margin-left: 28px; border-radius: 50%; background: #8a6f66; color: #fff; font-size: 22px; line-height: 44px; text-align: center; }
.dots { margin-left: 39px; display: flex; flex-direction: column; gap: 4px; }
.dots i { width: 6px; height: 6px; border-radius: 50%; background: #f1f3f4; }

.bookmarks {
  flex: none; height: 66px; display: flex; gap: 34.400px; padding: 0 0 9px 28.500px; align-items: center; background: #35363a;
  border-bottom: 2px solid #5b5c60; color: #fff; font-size: 24px; font-weight: 500; letter-spacing: -.018em;
}
.bookmarks a { display: flex; align-items: center; gap: 16px; white-space: nowrap; }
.bookmarks a:nth-child(2) { letter-spacing: -.034em; }
.bookmarks .wide { letter-spacing: -.012em; }
.mini-apple { height: 26px; fill: #737373; }

/* Dashboard */
.app-header { flex: none; height: 128px; padding: 2px 0 0 92px; background: #4090c8; color: #fff; font-size: 38px; line-height: 128px; letter-spacing: -.016em; }
.page { display: flex; align-items: flex-start; gap: 8px; padding: 12px 0 0 204px; color: #111; font-size: 31px; letter-spacing: -.009em; }
.card { width: 640px; display: flex; flex-direction: column; gap: 12px; padding: 0 34px 1px 26px; background: #fff; }
.card.event { width: 1180px; height: 1072px; }
.card h2 { margin: 0 0 9px; height: 90px; line-height: 91px; font-size: 38px; font-weight: 500; letter-spacing: -.022em; color: #5bbcf9; white-space: nowrap; }
.card p { margin: 0; height: 96px; line-height: 96px; white-space: nowrap; }
.card b { font-weight: 700; letter-spacing: .009em; }
.card p b { margin-left: 1px; }
.card b.wide { letter-spacing: .018em; }
.card b.loose { letter-spacing: .027em; }
.card b.snug { letter-spacing: 0; }
.field { width: 588px; height: 87px; margin-bottom: 9px; border-bottom: 2px solid #4090c8; display: flex; flex-direction: column; }
.field span { margin: 19px 0 0 -6px; font-size: 24px; line-height: 26px; letter-spacing: -.027em; }
.field .value { margin: -5px 0 0 16px; font-size: 31px; line-height: 34px; letter-spacing: -.013em; }
.centered { height: 96px; display: flex; flex-direction: column; align-items: center; justify-content: center; line-height: 44px; }
.lifted { padding-bottom: 6px; }
.missing-image { width: 1164px; height: 720px; margin: 11px 0 0 -12px; border: 2px solid #c0c0c0; border-right: 0; padding: 2px; }
.missing-image svg { width: 32px; height: 32px; }

/* Dock */
.dock {
  position: relative; flex: none; width: 2496px; height: 126px; margin: 2px 0 0 192px; padding: 17px 0 0 17px;
  display: flex; align-items: flex-start; border: 2px solid rgba(255, 255, 255, .16); border-radius: 44px;
  background: linear-gradient(90deg, #1c1230, #1d1333 40%, #231346 55%, #40165c 68%, #471469 76%, #2c144e 88%, #22163f);
  box-shadow: 0 0 80px rgba(0, 0, 0, .28);
}
.icon { position: relative; width: 78px; height: 78px; margin-right: 26px; }
.icon.big { width: 82px; height: 82px; margin: -2px 24px 0 -2px; }
.running::after { content: ""; position: absolute; left: calc(50% - 4px); top: 95px; width: 8px; height: 8px; border-radius: 50%; background: #a893c9; }
.badge { position: absolute; top: -9px; right: -12px; width: 36px; height: 36px; border-radius: 50%; background: #e04c3e; color: #fff; font-size: 23px; line-height: 36px; text-align: center; }
.sep { width: 2px; height: 94px; margin-top: -3px; background: rgba(255, 255, 255, .22); }
.sep.first { margin-left: 9px; margin-right: 35px; }
.sep.second { margin-left: 37px; margin-right: 39px; }
.icon.preview { margin-right: 17px; }
.preview svg { width: 82px; height: 84px; }
.icon.vpn { width: 96px; height: 96px; margin: -9px 17px 0 0; }
.vpn::after { top: 104px; }
.icon.edit { margin: -8px 0 0; }
.edit svg { width: 78px; height: 90px; }
.icon.stack { width: 64px; margin: -8px 38px 0 0; }
.stack svg { width: 64px; height: 92px; }
.icon.trash { width: 68px; margin: -8px 0 0; }
.trash svg { width: 68px; height: 90px; }
.cal-month { font: 600 15.500px Inter, sans-serif; fill: #fff; text-anchor: middle; }
.cal-day { font: 300 47px Inter, sans-serif; fill: #222; text-anchor: middle; }
.talk { font: 700 20px "Open Sans", sans-serif; fill: #fae54b; text-anchor: middle; letter-spacing: -.02em; }
.vpn-text { font: 700 20px "Open Sans", sans-serif; fill: #fff; text-anchor: middle; letter-spacing: -.03em; }
```
